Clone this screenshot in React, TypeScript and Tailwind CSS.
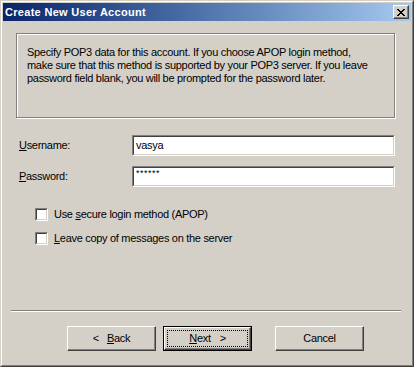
import React from "react";

const font = { fontFamily: '"Liberation Sans", Arial, sans-serif' };

function Field({ value, small }: { value: string; small?: boolean }) {
  return (
    <div className="w-[263px] h-[21px] border border-t-[#808080] border-l-[#808080] border-r-white border-b-white">
      <div className="h-full border border-t-[#404040] border-l-[#404040] border-r-[#d4d0c8] border-b-[#d4d0c8] bg-white pl-[2px] flex items-center">
        {small ? (
          <span className="text-[9px] leading-none tracking-[0.5px] -mt-[6px]">{value}</span>
        ) : (
          <span className="text-[11px] leading-none tracking-[-0.3px]">{value}</span>
        )}
      </div>
    </div>
  );
}

function Check({ children }: { children: React.ReactNode }) {
  return (
    <div className="flex items-center h-[13px] pl-[32px]">
      <div className="w-[13px] h-[13px] border border-t-[#808080] border-l-[#808080] border-r-white border-b-white">
        <div className="h-full border border-t-[#404040] border-l-[#404040] border-r-[#d4d0c8] border-b-[#d4d0c8] bg-white" />
      </div>
      <span className="ml-[6px] text-[11px] leading-none tracking-[-0.3px]">{children}</span>
    </div>
  );
}

function Button({ children, primary }: { children: React.ReactNode; primary?: boolean }) {
  if (primary) {
    return (
      <div className="w-[89px] h-[25px] border border-black">
        <div className="h-full border border-t-white border-l-white border-r-[#404040] border-b-[#404040] shadow-[inset_-1px_-1px_0_#808080] p-[2px]">
          <div className="h-full border border-dotted border-black flex items-center justify-center text-[11px] tracking-[-0.3px]">
            {children}
          </div>
        </div>
      </div>
    );
  }
  return (
    <div className="w-[89px] h-[25px] border border-t-white border-l-white border-r-[#404040] border-b-[#404040] shadow-[inset_-1px_-1px_0_#808080] flex items-center justify-center text-[11px] tracking-[-0.3px]">
      {children}
    </div>
  );
}

export default function App() {
  return (
    <div style={font} className="w-[414px] h-[367px] border border-t-[#d4d0c8] border-l-[#d4d0c8] border-r-[#404040] border-b-[#404040] bg-[#d4d0c8] text-black">
      <div className="h-full border border-t-white border-l-white border-r-[#808080] border-b-[#808080] p-px flex flex-col">
        {/* title bar */}
        <div className="h-[18px] bg-gradient-to-r from-[#0a246a] to-[#a6caf0] flex items-center justify-between pl-[2px] pr-[2px]">
          <span className="text-white font-bold text-[11px] tracking-[0.3px]">Create New User Account</span>
          <div className="w-[16px] h-[14px] bg-[#d4d0c8] border border-t-white border-l-white border-r-[#404040] border-b-[#404040] shadow-[inset_-1px_-1px_0_#808080] flex items-center justify-center">
            <svg width="8" height="7" viewBox="0 0 8 7" shapeRendering="crispEdges">
              <path d="M0 0h2v1H0zM6 0h2v1H6zM1 1h2v1H1zM5 1h2v1H5zM2 2h4v1H2zM3 3h2v1H3zM2 4h4v1H2zM1 5h2v1H1zM5 5h2v1H5zM0 6h2v1H0zM6 6h2v1H6z" fill="#000" />
            </svg>
          </div>
        </div>

        {/* body */}
        <div className="flex-1 flex flex-col">
          <div className="mt-[12px] ml-[13px] w-[379px] h-[85px] border border-[#808080] shadow-[inset_1px_1px_0_#fff,1px_1px_0_#fff] pl-[10px] pt-[12px]">
            <p className="text-[11px] leading-[13px] tracking-[-0.3px]">
              Specify POP3 data for this account. If you choose APOP login method,
              <br />
              make sure that this method is supported by your POP3 server. If you leave
              <br />
              password field blank, you will be prompted for the password later.
            </p>
          </div>

          <div className="mt-[17px] pl-[16px] flex items-center">
            <span className="w-[113px] text-[11px] tracking-[-0.3px]">
              <u>U</u>sername:
            </span>
            <Field value="vasya" />
          </div>
          <div className="mt-[10px] pl-[16px] flex items-center">
            <span className="w-[113px] text-[11px] tracking-[-0.3px]">
              <u>P</u>assword:
            </span>
            <Field value="******" small />
          </div>

          <div className="mt-[21px]">
            <Check>
              Use <u>s</u>ecure login method (APOP)
            </Check>
          </div>
          <div className="mt-[11px]">
            <Check>
              <u>L</u>eave copy of messages on the server
            </Check>
          </div>

          <div className="mt-[65px] ml-[8px] w-[390px] h-[2px] border-t border-t-[#808080] border-b border-b-white" />

          <div className="mt-[14px] ml-[64px] flex">
            <Button>
              <span>&lt;</span>
              <span className="ml-[8px]">
                <u>B</u>ack
              </span>
            </Button>
            <div className="ml-[7px]">
              <Button primary>
                <span>
                  <u>N</u>ext
                </span>
                <span className="ml-[9px]">&gt;</span>
              </Button>
            </div>
            <div className="ml-[23px]">
              <Button>Cancel</Button>
            </div>
          </div>
        </div>
      </div>
    </div>
  );
}
